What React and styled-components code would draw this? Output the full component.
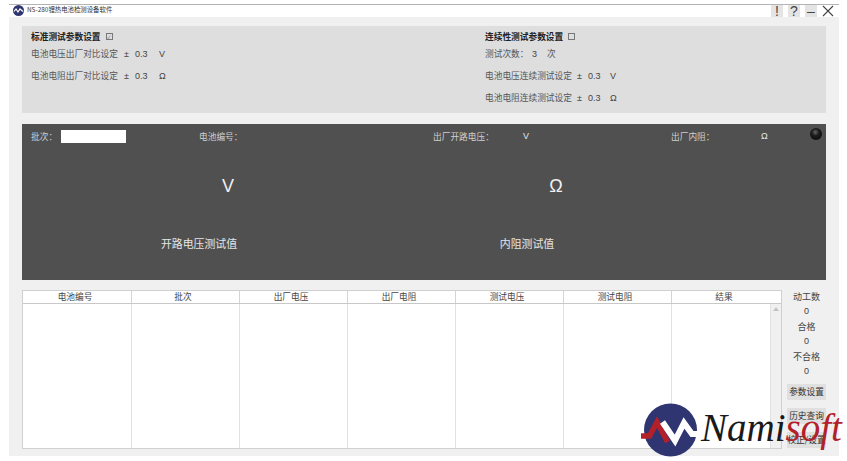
import React from 'react';
import styled, { createGlobalStyle } from 'styled-components';

const GlobalStyle = createGlobalStyle`
  html, body {
    margin: 0;
    padding: 0;
    background: #fff;
    overflow: hidden;
  }
  body {
    font-family: "Noto Sans CJK SC", "Liberation Sans", sans-serif;
    font-size: 8.7px;
    color: #444;
  }
`;

const Page = styled.div`
  position: relative;
  width: 847px;
  height: 461px;
  padding: 4px 8px 5px 9px;
  box-sizing: border-box;
  overflow: hidden;
`;

const Window = styled.div`
  height: 452px;
  background: #f0f0f0;
  border-top: 1px solid #b4b4b4;
  box-sizing: border-box;
  display: flex;
  flex-direction: column;
`;

const TitleBar = styled.div`
  height: 12px;
  background: #fff;
  display: flex;
  align-items: flex-start;
  gap: 3px;
  padding-left: 3px;
  font-size: 6.4px;
  color: #333;
`;

const TitleIcon = styled.svg`
  display: block;
  margin-left: 1px;
`;

const TitleText = styled.span`
  flex: 1;
  line-height: 10px;
`;

const WinButtons = styled.div`
  display: flex;
  gap: 5px;
  padding-right: 5px;
`;

const WinButton = styled.div`
  width: 12px;
  height: 12px;
  background: ${(p) => (p.$plain ? 'transparent' : '#e4e4e4')};
  color: #444;
  font-family: "Liberation Sans", sans-serif;
  font-size: 14px;
  line-height: 12px;
  text-align: center;
`;

const Content = styled.div`
  flex: 1;
  padding: 9px 13px 7px 13px;
  display: flex;
  flex-direction: column;
`;

const SettingsPanel = styled.div`
  height: 87px;
  background: #dedede;
  display: grid;
  grid-template-columns: 454px 1fr;
  padding: 2px 9px 0;
  box-sizing: border-box;
`;

const SettingsColumn = styled.div`
  display: flex;
  flex-direction: column;
`;

const SettingsHead = styled.div`
  display: flex;
  align-items: center;
  gap: 5px;
  height: 16px;
  margin-bottom: 3px;
  font-weight: 700;
  color: #222;
`;

const SettingsRow = styled.div`
  display: flex;
  height: 22px;
  line-height: 14px;
  color: #555;
`;

const Label = styled.span`
  width: ${(p) => p.$w}px;
`;

const Num = styled.span`
  width: ${(p) => p.$w}px;
  font-family: "Liberation Sans", sans-serif;
  font-size: 9px;
  color: ${(p) => (p.$light ? '#e6e6e6' : '#444')};
`;

const Tick = styled.span`
  display: block;
  width: 5px;
  height: 5px;
  border: 1px solid #777;
  font-size: 5px;
  line-height: 5px;
  font-weight: 400;
  text-align: center;
  color: #666;
`;

const DarkPanel = styled.div`
  position: relative;
  height: 156px;
  margin-top: 11px;
  background: #505050;
  display: flex;
  flex-direction: column;
`;

const InfoRow = styled.div`
  display: grid;
  grid-template-columns: 168px 234px 238px 1fr;
  padding: 6px 0 0 9px;
  height: 13px;
  line-height: 13px;
  color: #cfcfcf;
`;

const InfoCell = styled.div`
  display: flex;
  align-items: center;
`;

const BatchInput = styled.div`
  width: 65px;
  height: 13px;
  margin-left: 4px;
  background: #fff;
`;

const Led = styled.div`
  position: absolute;
  top: 4px;
  right: 4px;
  width: 12px;
  height: 12px;
  border-radius: 50%;
  background: radial-gradient(circle at 45% 35%, #666 0%, #1c1c1c 35%, #050505 100%);
`;

const Readouts = styled.div`
  display: grid;
  grid-template-columns: 354px 302px;
  margin-top: 30px;
`;

const Readout = styled.div`
  display: flex;
  flex-direction: column;
  align-items: center;
`;

const ReadValue = styled.div`
  height: 27px;
  padding-left: 58px;
  font-family: "Liberation Sans", sans-serif;
  font-size: 18px;
  line-height: 27px;
  color: #f2f2f2;
`;

const ReadLabel = styled.div`
  margin-top: 35px;
  font-size: 10.9px;
  line-height: 16px;
  color: #e6e6e6;
`;

const Bottom = styled.div`
  margin-top: 10px;
  flex: 1;
  display: flex;
  gap: 5px;
`;

const TableBox = styled.div`
  width: 760px;
  height: 159px;
  background: #fff;
  border: 1px solid #d0d0d0;
  box-sizing: border-box;
  display: flex;
  flex-direction: column;
`;

const HeadRow = styled.div`
  display: grid;
  grid-template-columns: repeat(6, 108px) 1fr;
  height: 12px;
  padding-left: 1px;
  border-bottom: 1px solid #c8c8c8;
  flex-shrink: 0;
`;

const HeadCell = styled.div`
  padding-right: 5px;
  text-align: center;
  line-height: 12px;
  color: #444;
  border-right: 1px solid #d4d4d4;
  &:last-child {
    border-right: 0;
  }
`;

const BodyArea = styled.div`
  flex: 1;
  display: flex;
`;

const BodyColumns = styled.div`
  flex: 1;
  display: grid;
  grid-template-columns: repeat(6, 108px) 1fr;
  padding-left: 1px;
`;

const BodyCol = styled.div`
  border-right: 1px solid #e2e2e2;
`;

const ScrollTrack = styled.div`
  width: 10px;
  background: #f0f0f0;
  display: flex;
  justify-content: center;
  padding-top: 3px;
  box-sizing: border-box;
`;

const SideColumn = styled.div`
  width: 39px;
  display: flex;
  flex-direction: column;
  align-items: center;
  color: #444;
`;

const Stat = styled.div`
  height: 15px;
  line-height: 15px;
  margin-top: ${(p) => (p.$first ? '-1px' : '0')};
  font-size: 9px;
  font-family: ${(p) => (p.$num ? '"Liberation Sans", sans-serif' : 'inherit')};
`;

const SideButton = styled.div`
  width: 39px;
  height: 16px;
  margin-top: 8px;
  background: #e0e0e0;
  line-height: 16px;
  text-align: center;
  font-size: 8.7px;
  color: #333;
  &:first-of-type {
    margin-top: 0;
  }
`;

const Buttons = styled.div`
  margin-top: 5px;
  display: flex;
  flex-direction: column;
`;

const Logo = styled.div`
  position: absolute;
  left: 640px;
  top: 403px;
  display: flex;
  align-items: flex-start;
`;

const LogoText = styled.div`
  margin-left: 1px;
  margin-top: 6px;
  font-family: "Liberation Serif", serif;
  font-style: italic;
  font-size: 39px;
  line-height: 38px;
  color: #1a1a1a;
  white-space: nowrap;
`;

const LogoRed = styled.span`
  color: #b3202a;
`;

const columns = ['电池编号', '批次', '出厂电压', '出厂电阻', '测试电压', '测试电阻', '结果'];

function NamiMark() {
  return (
    <svg width="60" height="54" viewBox="0 0 60 54">
      <circle cx="30.5" cy="27" r="26.5" fill="#2f3570" />
      <path d="M1 33 L9.5 33 L17 19 L27.5 39" fill="none" stroke="#b3202a" strokeWidth="5.5" />
      <path d="M22.5 19 L35 37.5 L44 20 L52 31 L57 31" fill="none" stroke="#fff" strokeWidth="6" />
    </svg>
  );
}

function LimitRow({ label, w, gap = 24, unit }) {
  return (
    <SettingsRow>
      <Label $w={w}>{label}</Label>
      <Num $w={11}>±</Num>
      <Num $w={gap}>0.3</Num>
      <Num $w={12}>{unit}</Num>
    </SettingsRow>
  );
}

export default function App() {
  return (
    <>
      <GlobalStyle />
      <Page>
        <Window>
          <TitleBar>
            <TitleIcon width="11" height="11" viewBox="0 0 11 11">
              <circle cx="5.5" cy="5.5" r="5.5" fill="#2f3570" />
              <path d="M1 6.5 L3 4 L5 7 L7 4 L10 6.5" fill="none" stroke="#fff" strokeWidth="1.2" />
            </TitleIcon>
            <TitleText>NS-280锂热电池检测设备软件</TitleText>
            <WinButtons>
              <WinButton>!</WinButton>
              <WinButton>?</WinButton>
              <WinButton>–</WinButton>
              <WinButton $plain>
                <svg width="12" height="12" viewBox="0 0 12 12">
                  <path d="M1 1 L11 11 M11 1 L1 11" stroke="#444" strokeWidth="1.1" fill="none" />
                </svg>
              </WinButton>
            </WinButtons>
          </TitleBar>
          <Content>
            <SettingsPanel>
              <SettingsColumn>
                <SettingsHead>标准测试参数设置<Tick>✓</Tick></SettingsHead>
                <LimitRow label="电池电压出厂对比设定" w={93} unit="V" />
                <LimitRow label="电池电阻出厂对比设定" w={93} unit="Ω" />
              </SettingsColumn>
              <SettingsColumn>
                <SettingsHead>连续性测试参数设置<Tick /></SettingsHead>
                <SettingsRow>
                  <Label $w={47}>测试次数：</Label>
                  <Num $w={15}>3</Num>
                  <Label $w={12}>次</Label>
                </SettingsRow>
                <LimitRow label="电池电压连续测试设定" w={92} gap={22} unit="V" />
                <LimitRow label="电池电阻连续测试设定" w={92} gap={22} unit="Ω" />
              </SettingsColumn>
            </SettingsPanel>

            <DarkPanel>
              <InfoRow>
                <InfoCell>批次：<BatchInput /></InfoCell>
                <InfoCell>电池编号：</InfoCell>
                <InfoCell>
                  <Label $w={90}>出厂开路电压：</Label>
                  <Num $w={20} $light>V</Num>
                </InfoCell>
                <InfoCell>
                  <Label $w={90}>出厂内阻：</Label>
                  <Num $w={20} $light>Ω</Num>
                </InfoCell>
              </InfoRow>
              <Led />
              <Readouts>
                <Readout>
                  <ReadValue>V</ReadValue>
                  <ReadLabel>开路电压测试值</ReadLabel>
                </Readout>
                <Readout>
                  <ReadValue>Ω</ReadValue>
                  <ReadLabel>内阻测试值</ReadLabel>
                </Readout>
              </Readouts>
            </DarkPanel>

            <Bottom>
              <TableBox>
                <HeadRow>
                  {columns.map((c) => <HeadCell key={c}>{c}</HeadCell>)}
                </HeadRow>
                <BodyArea>
                  <BodyColumns>
                    {columns.map((c) => <BodyCol key={c} />)}
                  </BodyColumns>
                  <ScrollTrack>
                    <svg width="6" height="4" viewBox="0 0 6 4">
                      <path d="M0 4 L3 0 L6 4 Z" fill="#c4c4c4" />
                    </svg>
                  </ScrollTrack>
                </BodyArea>
              </TableBox>
              <SideColumn>
                <Stat $first>动工数</Stat>
                <Stat $num>0</Stat>
                <Stat>合格</Stat>
                <Stat $num>0</Stat>
                <Stat>不合格</Stat>
                <Stat $num>0</Stat>
                <Buttons>
                  <SideButton>参数设置</SideButton>
                  <SideButton>历史查询</SideButton>
                  <SideButton>校正/设置</SideButton>
                </Buttons>
              </SideColumn>
            </Bottom>
          </Content>
        </Window>
        <Logo>
          <NamiMark />
          <LogoText>Nami<LogoRed>soft</LogoRed></LogoText>
        </Logo>
      </Page>
    </>
  );
}
